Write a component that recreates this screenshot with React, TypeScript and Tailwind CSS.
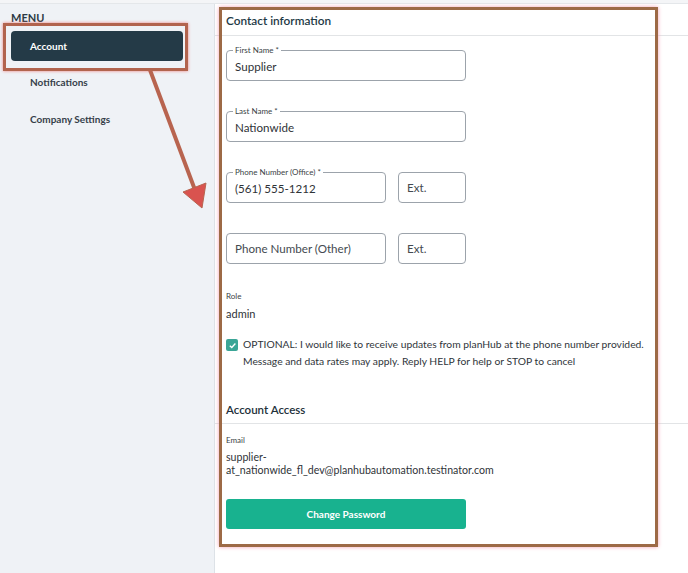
import React from "react";

const FONT = { fontFamily: "Lato, 'Open Sans', 'Liberation Sans', sans-serif" };

function Field({ label, value, placeholder, className }: { label?: string; value?: string; placeholder?: string; className?: string }) {
  return (
    <div className={`relative h-[31px] rounded-[4px] border border-[#9ca3ab] ${className ?? ""}`}>
      {label && (
        <span className="absolute -top-[6px] left-[6px] bg-white px-[2px] text-[8px] leading-[10px] text-[#3a3f45]">
          {label}
        </span>
      )}
      <div className={`flex h-full items-center px-[8px] ${label ? "pt-[3px]" : ""} text-[11.6px] ${value ? "text-[#2f3337]" : "text-[#444a50]"}`}>
        {value ?? placeholder}
      </div>
    </div>
  );
}

function Annotations() {
  return (
    <div className="pointer-events-none absolute inset-0">
      <div className="absolute left-[3px] top-[23px] h-[48px] w-[185px] border-[3px] border-[#b2644e] shadow-[0_0_3px_#f08080]" />
      <div className="absolute left-[219px] top-[7px] h-[540px] w-[439px] border-[3px] border-[#9d6a46] shadow-[0_0_4px_#f6a0b4]" />
      <svg className="absolute left-0 top-0" width="688" height="573">
        <line x1="150" y1="70" x2="195" y2="190" stroke="#b8644f" strokeWidth="4" />
        <polygon points="183,192 206,183 202,208" fill="#d9534f" stroke="#b8644f" strokeWidth="1" />
      </svg>
    </div>
  );
}

export default function App() {
  return (
    <div className="relative h-[573px] w-[688px] overflow-hidden bg-white" style={FONT}>
      <div className="h-[4px] border-b border-[#e4e7ea] bg-[#f4f5f7]" />
      <div className="flex h-[569px]">
        <aside className="w-[215px] shrink-0 border-r border-[#dde2e7] bg-[#eff2f6]">
          <div className="pl-[11px] pt-[8px] text-[11px] font-bold leading-[12px] text-[#2c3a44]">MENU</div>
          <nav className="mt-[7px] flex flex-col">
            <div className="ml-[11px] flex h-[30px] w-[172px] items-center rounded-[4px] bg-[#243a47] pl-[19px] text-[10px] font-bold text-white">
              Account
            </div>
            <div className="mt-[6px] flex h-[30px] items-center pl-[30px] text-[10px] font-bold text-[#363f4a]">
              Notifications
            </div>
            <div className="mt-[7px] flex h-[30px] items-center pl-[30px] text-[10px] font-bold text-[#363f4a]">
              Company Settings
            </div>
          </nav>
        </aside>
        <main className="flex-1">
          <div className="border-b border-[#e2e4e6] pb-[6px] pl-[11px] pt-[9px] text-[11.8px] font-semibold leading-[16px] text-[#1e3a46]">
            Contact information
          </div>
          <div className="pl-[11px]">
            <Field className="mt-[14px] w-[240px]" label="First Name *" value="Supplier" />
            <Field className="mt-[30px] w-[240px]" label="Last Name *" value="Nationwide" />
            <div className="mt-[30px] flex gap-[12px]">
              <Field className="w-[160px]" label="Phone Number (Office) *" value="(561) 555-1212" />
              <Field className="w-[68px]" placeholder="Ext." />
            </div>
            <div className="mt-[30px] flex gap-[12px]">
              <Field className="w-[160px]" placeholder="Phone Number (Other)" />
              <Field className="w-[68px]" placeholder="Ext." />
            </div>
            <div className="mt-[27px] text-[8px] leading-[10px] text-[#3a3f45]">Role</div>
            <div className="mt-[6px] text-[11px] leading-[14px] text-[#2f3337]">admin</div>
            <div className="mt-[15px] flex gap-[5px]">
              <div className="mt-[3px] flex h-[12px] w-[12px] shrink-0 items-center justify-center rounded-[2px] bg-[#3aa596]">
                <svg width="9" height="9" viewBox="0 0 10 10">
                  <path d="M2 5.2 L4.2 7.3 L8.2 2.8" fill="none" stroke="white" strokeWidth="1.5" />
                </svg>
              </div>
              <p className="w-[420px] text-[10.3px] leading-[17px] text-[#30353a]">
                OPTIONAL: I would like to receive updates from planHub at the phone number provided. Message and data rates may apply. Reply HELP for help or STOP to cancel
              </p>
            </div>
          </div>
          <div className="mt-[32px] border-b border-[#e2e4e6] pb-[5px] pl-[11px] text-[11.5px] font-semibold leading-[16px] text-[#22303a]">
            Account Access
          </div>
          <div className="pl-[11px]">
            <div className="mt-[11px] text-[8px] leading-[10px] text-[#3a3f45]">Email</div>
            <div className="mt-[6px] text-[10.6px] leading-[13px] text-[#2f3337]">
              supplier-
              <br />
              at_nationwide_fl_dev@planhubautomation.testinator.com
            </div>
            <button className="mt-[22px] flex h-[30px] w-[240px] items-center justify-center rounded-[3px] bg-[#18b28f] text-[10px] font-bold text-white">
              Change Password
            </button>
          </div>
        </main>
      </div>
      <Annotations />
    </div>
  );
}
